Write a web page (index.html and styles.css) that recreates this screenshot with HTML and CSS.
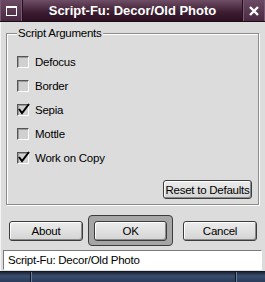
FILE: index.html
```html
<!DOCTYPE html>
<html lang="en">
<head>
    <meta charset="UTF-8">
    <title>Script-Fu: Decor/Old Photo</title>
    <link rel="stylesheet" href="styles.css">
</head>
<body>

    <div class="window">
        <div class="titlebar">
            <div class="titlebar__btn">
                <svg width="11" height="10" viewBox="0 0 11 10">
                    <rect x="0.5" y="0.5" width="10" height="9" fill="none" stroke="#fff"/>
                    <rect x="0" y="0" width="11" height="2" fill="#fff"/>
                </svg>
            </div>
            <div class="titlebar__title">Script-Fu: Decor/Old Photo</div>
            <div class="titlebar__btn">
                <svg width="10" height="10" viewBox="0 0 10 10">
                    <path d="M1 1 L9 9 M9 1 L1 9" stroke="#fff" stroke-width="2.4"/>
                </svg>
            </div>
        </div>

        <div class="content">
            <fieldset class="frame">
                <legend class="frame__legend">Script Arguments</legend>

                <label class="check"><span class="check__box"></span>Defocus</label>
                <label class="check"><span class="check__box"></span>Border</label>
                <label class="check">
                    <span class="check__box">
                        <svg class="check__mark" width="14" height="14" viewBox="0 0 14 14">
                            <path d="M2 7 L5 11 L12 2" fill="none" stroke="#000" stroke-width="2"/>
                        </svg>
                    </span>Sepia
                </label>
                <label class="check"><span class="check__box"></span>Mottle</label>
                <label class="check">
                    <span class="check__box">
                        <svg class="check__mark" width="14" height="14" viewBox="0 0 14 14">
                            <path d="M2 7 L5 11 L12 2" fill="none" stroke="#000" stroke-width="2"/>
                        </svg>
                    </span>Work on Copy
                </label>

                <div class="frame__actions">
                    <button class="btn btn--reset">Reset to Defaults</button>
                </div>
            </fieldset>

            <div class="buttons">
                <button class="btn btn--about">About</button>
                <div class="default-ring">
                    <button class="btn btn--ok">OK</button>
                </div>
                <button class="btn btn--cancel">Cancel</button>
            </div>

            <div class="status">Script-Fu: Decor/Old Photo</div>
        </div>

        <div class="taskbar">
            <span class="taskbar__sep taskbar__sep--left"></span>
            <span class="taskbar__sep taskbar__sep--right"></span>
        </div>
    </div>

</body>
</html>
```

FILE: styles.css
```css
* {
    margin: 0;
    padding: 0;
    box-sizing: border-box;
}

body {
    width: 265px;
    height: 282px;
    overflow: hidden;
    background: #dcdcdc;
    font-family: "Liberation Sans", Arial, sans-serif;
    font-size: 11.5px;
    letter-spacing: -0.25px;
    color: #000;
}

.window {
    display: flex;
    flex-direction: column;
    height: 282px;
}

/* title bar */
.titlebar {
    display: flex;
    height: 22px;
    background: linear-gradient(#6e4d66, #3c1c30 60%, #2c1022);
    border-bottom: 1px solid #1e0a16;
}

.titlebar__btn {
    width: 22px;
    display: flex;
    justify-content: center;
    align-items: center;
    background: linear-gradient(#6a4a64, #4a2a42);
    border-right: 1px solid #7a5a72;
    border-left: 1px solid #7a5a72;
}

.titlebar__title {
    flex: 1;
    text-align: center;
    color: #fff;
    font-weight: bold;
    font-size: 13px;
    letter-spacing: 0;
    line-height: 21px;
    border-left: 1px solid #24101c;
    border-right: 1px solid #24101c;
}

/* main area */
.content {
    flex: 1;
    display: flex;
    flex-direction: column;
    padding: 4px 3px 0 3px;
    border-left: 1px solid #f4f4f4;
}

.frame {
    margin: 0 3px 0 2px;
    border: 1px solid #8c8c8c;
    box-shadow: inset 1px 1px 0 #fff, 1px 1px 0 #fff;
    padding: 10px 6px 5px 10px;
}

.frame__legend {
    margin-left: 0;
    padding: 0 1px;
    line-height: 14px;
    background: #dcdcdc;
}

.check {
    display: flex;
    align-items: center;
    height: 24px;
    gap: 6px;
}

.check__box {
    width: 12px;
    height: 12px;
    border: 1px solid;
    border-color: #555 #fff #fff #555;
    box-shadow: inset 1px 1px 0 #9a9a9a;
    background: #d0d0d0;
    position: relative;
}

.check__mark {
    position: absolute;
    left: -1px;
    top: -3px;
}

.frame__actions {
    display: flex;
    justify-content: flex-end;
    margin-top: 10px;
}

/* buttons */
.btn {
    font-family: inherit;
    font-size: 11.5px;
    letter-spacing: -0.25px;
    white-space: nowrap;
    padding: 0;
    height: 20px;
    border: 1px solid #3c3c3c;
    border-radius: 3px;
    background: linear-gradient(#ececec, #d4d4d4);
    box-shadow: inset 1px 1px 0 #fff, inset -1px -1px 0 #8a8a8a;
    color: #000;
}

.btn--reset {
    width: 89px;
    height: 19px;
}

.buttons {
    display: flex;
    align-items: center;
    margin-top: 10px;
    padding-left: 5px;
}

.btn--about,
.btn--cancel {
    width: 74px;
}

.default-ring {
    display: flex;
    justify-content: center;
    align-items: center;
    width: 85px;
    height: 31px;
    margin: 0 10px 0 5px;
    border: 1px solid #3c3c3c;
    border-radius: 4px;
    background: #a6a6a6;
}

.btn--ok {
    width: 73px;
}

.status {
    margin: 4px 0 0 -1px;
    height: 20px;
    padding-left: 4px;
    line-height: 18px;
    background: #fff;
    border: 1px solid;
    border-color: #7a7a7a #fff #fff #7a7a7a;
}

/* bottom strip */
.taskbar {
    position: relative;
    height: 11px;
    background: linear-gradient(#1c2638, #3a4e6e 40%, #2a3a58);
    border-top: 1px solid #101826;
}

.taskbar__sep {
    position: absolute;
    top: 0;
    bottom: 0;
    width: 2px;
    border-left: 1px solid #0e1420;
    border-right: 1px solid #6a7ea0;
}

.taskbar__sep--left {
    left: 30px;
}

.taskbar__sep--right {
    left: 235px;
}
```
